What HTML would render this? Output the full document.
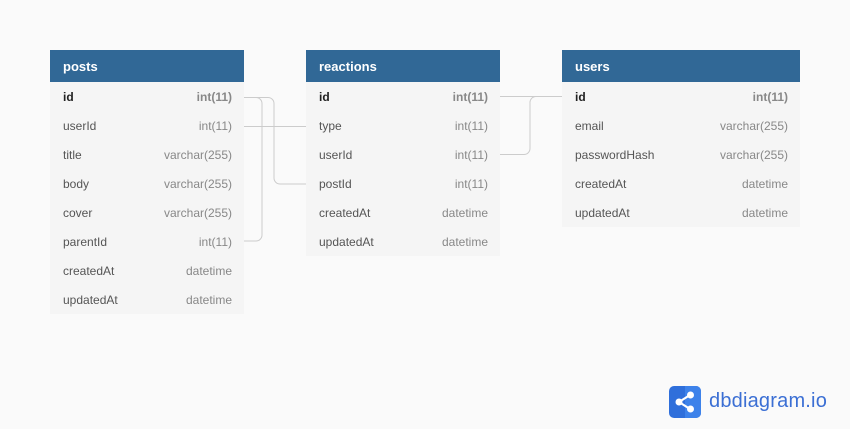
<!DOCTYPE html>
<html><head><meta charset="utf-8"><style>
body{margin:0;width:850px;height:429px;background:#fafafa;font-family:"Liberation Sans",Arial,sans-serif;position:relative;overflow:hidden}
.t{position:absolute;background:#f5f5f5}
.h{background:#316896;color:#fff;font-weight:bold;font-size:13px;height:32px;line-height:34px;padding-left:13px}
.r{height:29px;line-height:31px;font-size:12px;color:#555;padding:0 12px 0 13px;display:flex;justify-content:space-between}
.r span:last-child{color:#888}
.r.b span{font-weight:bold;color:#222}
.r.b span:last-child{color:#888}
svg.l{position:absolute;left:0;top:0}
</style></head><body>
<svg class="l" width="850" height="429"><g fill="none" stroke="#ccc" stroke-width="1">
<path d="M244 97.5H256a6 6 0 0 1 6 6V235a6 6 0 0 1-6 6H244"/>
<path d="M244 97.5H268a6 6 0 0 1 6 6V178a6 6 0 0 0 6 6H306"/>
<path d="M244 126.5H306"/>
<path d="M500 96.5H562"/>
<path d="M500 154.5H524a6 6 0 0 0 6-6V103a6 6 0 0 1 6-6.5H562"/>
</g></svg>
<div class="t" style="left:50px;top:50px;width:194px">
<div class="h">posts</div>
<div class="r b"><span>id</span><span>int(11)</span></div>
<div class="r"><span>userId</span><span>int(11)</span></div>
<div class="r"><span>title</span><span>varchar(255)</span></div>
<div class="r"><span>body</span><span>varchar(255)</span></div>
<div class="r"><span>cover</span><span>varchar(255)</span></div>
<div class="r"><span>parentId</span><span>int(11)</span></div>
<div class="r"><span>createdAt</span><span>datetime</span></div>
<div class="r"><span>updatedAt</span><span>datetime</span></div>
</div>
<div class="t" style="left:306px;top:50px;width:194px">
<div class="h">reactions</div>
<div class="r b"><span>id</span><span>int(11)</span></div>
<div class="r"><span>type</span><span>int(11)</span></div>
<div class="r"><span>userId</span><span>int(11)</span></div>
<div class="r"><span>postId</span><span>int(11)</span></div>
<div class="r"><span>createdAt</span><span>datetime</span></div>
<div class="r"><span>updatedAt</span><span>datetime</span></div>
</div>
<div class="t" style="left:562px;top:50px;width:238px">
<div class="h">users</div>
<div class="r b"><span>id</span><span>int(11)</span></div>
<div class="r"><span>email</span><span>varchar(255)</span></div>
<div class="r"><span>passwordHash</span><span>varchar(255)</span></div>
<div class="r"><span>createdAt</span><span>datetime</span></div>
<div class="r"><span>updatedAt</span><span>datetime</span></div>
</div>
<svg style="position:absolute;left:669px;top:386px" width="32" height="32" viewBox="0 0 32 32">
<rect width="32" height="32" rx="5" fill="#2f6fdb"/>
<path d="M16 0H27a5 5 0 0 1 5 5V27a5 5 0 0 1-5 5H16z" fill="#3d82ea"/>
<g stroke="#fff" stroke-width="2.2" fill="none"><path d="M10 16L21 9M10 16L21 23"/></g>
<circle cx="10" cy="16" r="3.5" fill="#fff"/><circle cx="21.5" cy="9" r="3.5" fill="#fff"/><circle cx="21.5" cy="23" r="3.5" fill="#fff"/>
</svg>
<div style="position:absolute;left:709px;top:390px;font-size:20px;color:#3b6fd4;letter-spacing:0.2px">dbdiagram.io</div>
</body></html>
